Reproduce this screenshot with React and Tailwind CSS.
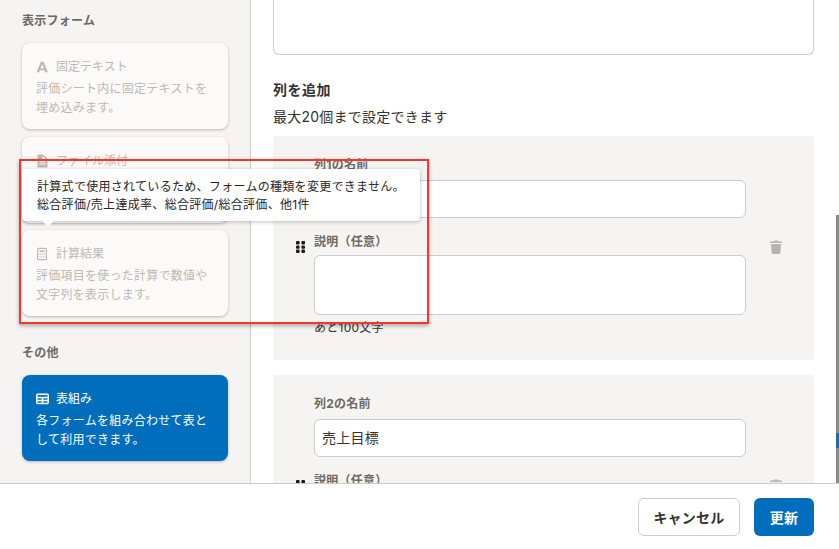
const JP = "font-['Inter','Noto_Sans_CJK_JP',sans-serif]";

function IconA({ className }) {
  return (
    <svg viewBox="0 0 14 14" className={className} fill="currentColor">
      <path d="M4.8 1.8h2.8L12 12.2H9.3l-.7-1.9H3.9l-.7 1.9H.6L4.8 1.8zm-.2 6.6h3.2L6.2 4.2 4.6 8.4z" />
    </svg>
  );
}
function IconFile({ className }) {
  return (
    <svg viewBox="0 0 14 14" className={className} fill="currentColor">
      <path fillRule="evenodd" d="M1.5.5h5.7L11.5 4.8v8.7h-10V.5zM6.5 1.8v3.7h3.7L6.5 1.8zM3.5 7.2v1h6v-1h-6zm0 2.3v1h6v-1h-6z" />
    </svg>
  );
}
function IconCalc({ className }) {
  return (
    <svg viewBox="0 0 14 14" className={className} fill="none" stroke="currentColor" strokeWidth="1.2">
      <rect x="1.6" y="1.4" width="8.8" height="11.2" rx="1" />
      <path d="M3.5 4.2h5" strokeWidth="1.6" />
      <path d="M3.5 7h1M5.5 7h1M7.5 7h1M3.5 9.8h1M5.5 9.8h1M7.5 9.8h1" strokeWidth="1.3" />
    </svg>
  );
}
function IconTable({ className }) {
  return (
    <svg viewBox="0 0 14 14" className={className} fill="none" stroke="currentColor" strokeWidth="1.5">
      <rect x="0.75" y="2.2" width="11.5" height="9.4" rx="1" />
      <path d="M0.75 5.4h11.5M0.75 8.5h11.5M6.5 5.4v6.2" />
    </svg>
  );
}
function IconGrip() {
  return (
    <svg viewBox="0 0 9 12" className="w-[9px] h-[12px] shrink-0" fill="#1c1917">
      <rect x="0" y="0" width="3.6" height="3.4" rx="1" />
      <rect x="5.4" y="0" width="3.6" height="3.4" rx="1" />
      <rect x="0" y="4.4" width="3.6" height="3.4" rx="1" />
      <rect x="5.4" y="4.4" width="3.6" height="3.4" rx="1" />
      <rect x="0" y="8.6" width="3.6" height="3.4" rx="1" />
      <rect x="5.4" y="8.6" width="3.6" height="3.4" rx="1" />
    </svg>
  );
}
function IconTrash() {
  return (
    <svg viewBox="0 0 12 14" className="w-[12px] h-[14px] shrink-0" fill="#b8b4ac">
      <path d="M4 .6h4l.5 1H11.5a.5.5 0 0 1 .5.5v.9H0v-.9a.5.5 0 0 1 .5-.5H3.5L4 .6z" />
      <path d="M1 4h10l-.7 9a1 1 0 0 1-1 .9H2.7a1 1 0 0 1-1-.9L1 4z" />
    </svg>
  );
}

function FormCard({ icon, title, desc, active }) {
  return (
    <div
      className={
        active
          ? "w-[206px] h-[86px] rounded-lg bg-[#006ebc] text-white px-[14px] pt-[14px] shadow-[0_1px_3px_rgba(0,0,0,0.25)]"
          : "w-[206px] h-[86px] rounded-lg bg-[#fbfaf9] text-[#bdb9b2] px-[14px] pt-[14px] shadow-[0_1px_3px_rgba(0,0,0,0.25)]"
      }
    >
      <div className="flex items-center gap-[6px] h-[20px] text-[12px] leading-[20px] tracking-normal">
        {icon}
        <span>{title}</span>
      </div>
      <p className="mt-[3px] text-[12px] leading-[18.5px]">{desc}</p>
    </div>
  );
}

function Field({ label, children }) {
  return (
    <div>
      <div className="text-[12px] leading-[18px] font-bold text-[#6d6862]">{label}</div>
      {children}
    </div>
  );
}

function ColumnPanel({ n, value }) {
  return (
    <div className="flex items-center bg-[#f5f4f2] pl-[23px] pr-[32px] pt-[20px] pb-[23px] gap-[9px]">
      <IconGrip />
      <div className="flex-1">
        <Field label={`列${n}の名前`}>
          <div className="mt-[6px] h-[38px] rounded-md border border-[#cfcbc6] bg-white px-[7px] text-[14px] leading-[36px] text-[#35322e]">
            {value}
          </div>
        </Field>
        <div className="mt-[15px]">
          <Field label="説明（任意）">
            <div className="mt-[4px] h-[60px] rounded-md border border-[#cfcbc6] bg-white" />
          </Field>
        </div>
        <div className="mt-[4px] text-[12px] leading-[18px] text-[#35322e]">あと100文字</div>
      </div>
      <div className="ml-[15px] shrink-0 flex justify-center"><IconTrash /></div>
    </div>
  );
}

export default function App() {
  return (
    <div className={`${JP} relative w-[839px] h-[549px] overflow-hidden bg-white flex flex-col text-[#35322e] tracking-[0.25px]`}>
      <div className="flex h-[483px] overflow-hidden shrink-0">
        <aside className="w-[251px] shrink-0 bg-[#f5f4f2] border-r border-[#cfcbc6] pl-[22px] pt-[12px]">
          <h2 className="text-[12px] leading-[18px] font-bold text-[#6d6862]">表示フォーム</h2>
          <div className="mt-[13px] flex flex-col gap-[7.5px]">
            <FormCard
              icon={<IconA className="w-[14px] h-[14px]" />}
              title="固定テキスト"
              desc="評価シート内に固定テキストを埋め込みます。"
            />
            <FormCard
              icon={<IconFile className="w-[14px] h-[14px]" />}
              title="ファイル添付"
              desc="ファイルを添付できます。"
            />
            <FormCard
              icon={<IconCalc className="w-[14px] h-[14px]" />}
              title="計算結果"
              desc="評価項目を使った計算で数値や文字列を表示します。"
            />
          </div>
          <h2 className="mt-[28px] text-[12px] leading-[18px] font-bold text-[#6d6862]">その他</h2>
          <div className="mt-[13px]">
            <FormCard
              active
              icon={<IconTable className="w-[14px] h-[14px]" />}
              title="表組み"
              desc="各フォームを組み合わせて表として利用できます。"
            />
          </div>
        </aside>
        <main className="w-[563px] pl-[22px] overflow-hidden">
          <div className="h-[55px] rounded-b-md border border-t-0 border-[#cfcbc6] bg-white" />
          <h3 className="mt-[25px] text-[14px] leading-[20px] font-bold text-[#35322e] tracking-[0.5px]">列を追加</h3>
          <p className="mt-[7px] text-[14px] leading-[20px] text-[#35322e]">最大20個まで設定できます</p>
          <div className="mt-[9px] flex flex-col gap-[15px]">
            <ColumnPanel n={1} value="" />
            <ColumnPanel n={2} value="売上目標" />
          </div>
        </main>
      </div>
      <footer className="flex-1 border-t border-[#cfcbc6] flex items-start justify-end gap-[14px] pt-[14px] pr-[25px]">
        <button className="h-[38px] w-[102px] rounded-md border border-[#cfcbc6] bg-white text-[14px] font-bold text-[#35322e]">キャンセル</button>
        <button className="h-[38px] w-[60px] rounded-md bg-[#006ebc] text-[14px] font-bold text-white">更新</button>
      </footer>

      <div className="absolute right-0 top-[215px] w-[3px] h-[268px] bg-[#8a8a8a]">
        <div className="absolute left-0 top-[218px] w-[3px] h-[15px] bg-[#2a6a9a]" />
      </div>
      <div className="absolute left-[19px] top-[159px] w-[410px] h-[165px] border-[2.5px] border-[#f8352d] shadow-[0_2px_4px_rgba(0,0,0,0.3)]" />
      <div className="absolute left-[22px] top-[169px] w-[398px] h-[52px] rounded bg-white shadow-[0_1px_4px_rgba(0,0,0,0.25)] px-[15px] py-[9px] text-[12px] leading-[17.5px] text-[#26241f] tracking-[0.3px]">
        <div>計算式で使用されているため、フォームの種類を変更できません。</div>
        <div>総合評価/売上達成率、総合評価/総合評価、他1件</div>
        <div className="absolute left-[22px] bottom-[-4px] w-[8px] h-[8px] bg-white rotate-45" />
      </div>
    </div>
  );
}
